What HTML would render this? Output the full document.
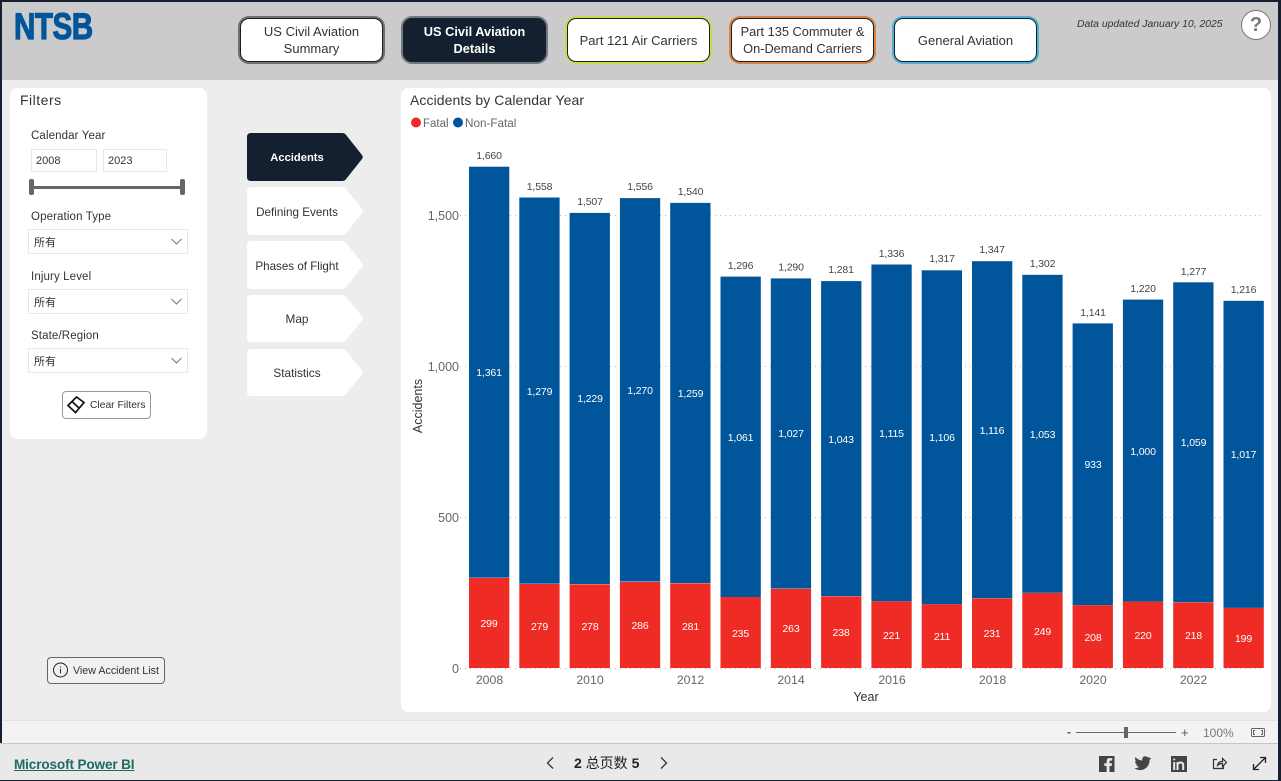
<!DOCTYPE html>
<html lang="en"><head><meta charset="utf-8"><title>NTSB Accidents by Calendar Year</title>
<style>
html,body{margin:0;padding:0;width:1281px;height:781px;overflow:hidden;background:#14202f}
body{font-family:"Liberation Sans","Noto Sans CJK SC",sans-serif;color:#333;position:relative}
.a{position:absolute;box-sizing:border-box}
.t{position:absolute;white-space:nowrap;line-height:1}
.btn{position:absolute;box-sizing:border-box;top:18px;height:44px;width:143px;border-radius:9px;background:#fff;border:1px solid #14202f;text-align:center;font-size:13px;line-height:17px;color:#333;display:flex;align-items:center;justify-content:center}
.lbl{position:absolute;font-size:11.5px;color:#333;letter-spacing:.12px;line-height:1;white-space:nowrap}
.dd{position:absolute;box-sizing:border-box;left:28px;width:160px;height:25px;background:#fff;border:1px solid #e8e8e8;font-size:11px;line-height:27px;padding-left:5px;color:#333}
.inp{position:absolute;box-sizing:border-box;top:149px;height:23px;background:#fff;border:1px solid #e8e8e8;font-size:11px;line-height:22px;padding-left:4px;color:#333}
</style></head><body>
<div class="a" style="left:2px;top:2px;width:1276px;height:78px;background:#cbcbcb"></div>
<div class="a" style="left:2px;top:80px;width:1276px;height:640px;background:#ededed"></div>
<div class="a" style="left:2px;top:720px;width:1276px;height:23px;background:#f3f3f3;border-top:1px solid #e2e2e2"></div>
<div class="a" style="left:0;top:743px;width:1278px;height:37px;background:#e9e9e9;border-top:1px solid #c6c6c6"></div>
<div class="t" style="left:14px;top:8px;font-size:37px;font-weight:bold;color:#00559b;letter-spacing:-.6px;transform:scaleX(.8);transform-origin:0 0;-webkit-text-stroke:1.2px #00559b">NTSB</div>

<div class="btn" style="left:240px;box-shadow:0 0 0 2px #6f6f6f">US Civil Aviation<br>Summary</div>
<div class="btn" style="left:403px;background:#14202f;color:#fff;font-weight:bold;font-size:12.800px;box-shadow:0 0 0 2px #72787f">US Civil Aviation<br>Details</div>
<div class="btn" style="left:567px;box-shadow:0 0 0 2px #d2d64c">Part 121 Air Carriers</div>
<div class="btn" style="left:731px;box-shadow:0 0 0 2px #d9833f;font-size:12.800px">Part 135 Commuter &amp;<br>On-Demand Carriers</div>
<div class="btn" style="left:894px;box-shadow:0 0 0 2px #4fb0cf">General Aviation</div>
<div class="t" style="left:1077px;top:20px;font-size:10.400px;font-style:italic;color:#333">Data updated January 10, 2025</div>
<div class="a" style="left:1241px;top:10px;width:30px;height:30px;border-radius:50%;background:#fff;border:1px solid #777;color:#777;font-size:20px;line-height:28px;text-align:center;font-weight:bold">?</div>

<div class="a" style="left:10px;top:88px;width:197px;height:351px;background:#fff;border-radius:8px"></div>
<div class="t" style="left:20px;top:93px;font-size:14px;letter-spacing:.5px;color:#333">Filters</div>
<div class="lbl" style="left:31px;top:131px">Calendar Year</div>
<div class="inp" style="left:31px;width:66px">2008</div>
<div class="inp" style="left:103px;width:64px">2023</div>
<div class="a" style="left:31px;top:186px;width:152px;height:3px;background:#666"></div>
<div class="a" style="left:29px;top:179px;width:5px;height:16px;background:#666;border-radius:2px"></div>
<div class="a" style="left:180px;top:179px;width:5px;height:16px;background:#666;border-radius:2px"></div>
<div class="lbl" style="left:31px;top:211.500px">Operation Type</div>
<div class="dd" style="top:229px">所有</div>
<div class="lbl" style="left:31px;top:271.500px">Injury Level</div>
<div class="dd" style="top:289px">所有</div>
<div class="lbl" style="left:31px;top:330.500px">State/Region</div>
<div class="dd" style="top:348px">所有</div>
<svg class="a" style="left:0;top:0" width="400" height="720" fill="none" stroke="#777" stroke-width="1">
<path d="M171.500 239l5 5 5-5M171.500 299l5 5 5-5M171.500 358l5 5 5-5"/>
<path d="M247 137q0-4 4-4h91q3 0 4.500 2.500l15.500 19.500q1.500 2 0 4l-15.500 19.500q-1.500 2.500-4.500 2.500h-91q-4 0-4-4z" fill="#14202f" stroke="none"/>
<path d="M247 191q0-4 4-4h91q3 0 4.500 2.500l15.500 19.500q1.500 2 0 4l-15.500 19.500q-1.500 2.500-4.500 2.500h-91q-4 0-4-4z" fill="#fff" stroke="none"/>
<path d="M247 245q0-4 4-4h91q3 0 4.500 2.500l15.500 19.500q1.500 2 0 4l-15.500 19.500q-1.500 2.500-4.500 2.500h-91q-4 0-4-4z" fill="#fff" stroke="none"/>
<path d="M247 299q0-4 4-4h91q3 0 4.500 2.500l15.500 19q1.500 2 0 4l-15.500 19q-1.500 2.500-4.500 2.500h-91q-4 0-4-4z" fill="#fff" stroke="none"/>
<path d="M247 353q0-4 4-4h91q3 0 4.500 2.500l15.500 19q1.500 2 0 4l-15.500 19q-1.500 2.500-4.500 2.500h-91q-4 0-4-4z" fill="#fff" stroke="none"/>
</svg>
<div class="t" style="left:247px;width:100px;top:153px;text-align:center;color:#fff;font-weight:bold;font-size:11.200px">Accidents</div>
<div class="t" style="left:247px;width:100px;top:207px;text-align:center;font-size:11.700px">Defining Events</div>
<div class="t" style="left:247px;width:100px;top:261px;text-align:center;font-size:11.600px">Phases of Flight</div>
<div class="t" style="left:247px;width:100px;top:314px;text-align:center;font-size:11.800px">Map</div>
<div class="t" style="left:247px;width:100px;top:368px;text-align:center;font-size:11.800px">Statistics</div>

<div class="a" style="left:62px;top:391px;width:89px;height:28px;border:1px solid #999;border-radius:4px;background:#fff"></div>
<svg class="a" style="left:66px;top:395px" width="20" height="20" fill="none" stroke="#111" stroke-width="1.700"><path d="M2 10.500L10.500 2 18 7.500 9.500 17.500zM6 6.500l7 6.500"/></svg>
<div class="t" style="left:90px;top:401px;font-size:10.300px;color:#333">Clear Filters</div>
<div class="a" style="left:47px;top:657px;width:118px;height:27px;border:1px solid #666;border-radius:4px;background:#f1f1f1"></div>
<svg class="a" style="left:52px;top:662px" width="17" height="17" fill="none" stroke="#222" stroke-width="1"><circle cx="8.500" cy="8" r="7"/><path d="M8.500 7v4.500M8.500 4.500v1.300"/></svg>
<div class="t" style="left:73px;top:666px;font-size:10.700px;color:#333">View Accident List</div>

<div class="a" style="left:401px;top:88px;width:870px;height:624px;background:#fff;border-radius:8px"></div>
<div class="t" style="left:410px;top:93px;font-size:14px;letter-spacing:.08px;color:#333">Accidents by Calendar Year</div>
<svg class="a" style="left:0;top:0" width="1281" height="720" font-family="'Liberation Sans',sans-serif" font-size="10.500" letter-spacing="-.15" text-anchor="middle">
<circle cx="416" cy="122.500" r="5" fill="#ee2b24"/><circle cx="458" cy="122.500" r="5" fill="#00559b"/>
<text x="423" y="127" text-anchor="start" font-size="11.500" letter-spacing="0" fill="#666">Fatal</text>
<text x="465" y="127" text-anchor="start" font-size="11.700" letter-spacing="0" fill="#666">Non-Fatal</text>
<g stroke="#b9b9b9" stroke-dasharray="1 4" stroke-width="1">
<path d="M460 215.500H1263M460 366.500H1263M460 517.500H1263M460 668.500H1263"/></g>
<g fill="#666" font-size="12.500" letter-spacing="0" text-anchor="end">
<text x="459" y="220">1,500</text><text x="459" y="371">1,000</text><text x="459" y="522">500</text><text x="459" y="673">0</text></g>
<text transform="translate(422,406) rotate(-90)" font-size="12.500" letter-spacing="0" fill="#333">Accidents</text>
<text x="866" y="701" font-size="12.500" letter-spacing="0" fill="#333">Year</text>
<g fill="#666" font-size="12.300" letter-spacing="0">
<text x="489.500" y="684">2008</text><text x="590" y="684">2010</text><text x="690.500" y="684">2012</text><text x="791" y="684">2014</text><text x="892" y="684">2016</text><text x="992.500" y="684">2018</text><text x="1093" y="684">2020</text><text x="1193.500" y="684">2022</text></g>
<g fill="#00559b">
<rect x="469" y="166.700" width="40.300" height="411"/><rect x="519.300" y="197.500" width="40.300" height="386.200"/><rect x="569.600" y="212.900" width="40.300" height="371.100"/><rect x="619.900" y="198.100" width="40.300" height="383.500"/><rect x="670.200" y="202.900" width="40.300" height="380.200"/><rect x="720.500" y="276.600" width="40.300" height="320.400"/><rect x="770.800" y="278.400" width="40.300" height="310.200"/><rect x="821.100" y="281.100" width="40.300" height="315"/><rect x="871.400" y="264.500" width="40.300" height="336.800"/><rect x="921.700" y="270.300" width="40.300" height="334"/><rect x="972" y="261.200" width="40.300" height="337"/><rect x="1022.300" y="274.800" width="40.300" height="318"/><rect x="1072.600" y="323.400" width="40.300" height="281.800"/><rect x="1122.900" y="299.600" width="40.300" height="302"/><rect x="1173.200" y="282.300" width="40.300" height="319.900"/><rect x="1223.500" y="300.800" width="40.300" height="307.100"/></g>
<g fill="#ee2b24">
<rect x="469" y="578" width="40.300" height="90"/><rect x="519.300" y="584" width="40.300" height="84"/><rect x="569.600" y="584.300" width="40.300" height="83.700"/><rect x="619.900" y="582" width="40.300" height="86"/><rect x="670.200" y="583.400" width="40.300" height="84.600"/><rect x="720.500" y="597" width="40.300" height="71"/><rect x="770.800" y="588.900" width="40.300" height="79.100"/><rect x="821.100" y="596.300" width="40.300" height="71.700"/><rect x="871.400" y="601.300" width="40.300" height="66.700"/><rect x="921.700" y="604.300" width="40.300" height="63.700"/><rect x="972" y="598.400" width="40.300" height="69.600"/><rect x="1022.300" y="593" width="40.300" height="75"/><rect x="1072.600" y="605.200" width="40.300" height="62.800"/><rect x="1122.900" y="601.600" width="40.300" height="66.400"/><rect x="1173.200" y="602.400" width="40.300" height="65.600"/><rect x="1223.500" y="608" width="40.300" height="60"/></g>
<g fill="#444">
<text x="489" y="159">1,660</text><text x="539.500" y="190">1,558</text><text x="590" y="205">1,507</text><text x="640" y="190">1,556</text><text x="690.500" y="195">1,540</text><text x="740.500" y="269">1,296</text><text x="791" y="270.500">1,290</text><text x="841" y="273">1,281</text><text x="891.500" y="257">1,336</text><text x="942" y="262">1,317</text><text x="992" y="253">1,347</text><text x="1042.500" y="267">1,302</text><text x="1093" y="316">1,141</text><text x="1143" y="292">1,220</text><text x="1193.500" y="275">1,277</text><text x="1243.500" y="293">1,216</text></g>
<g fill="#fff">
<text x="489" y="376">1,361</text><text x="539.500" y="395">1,279</text><text x="590" y="402">1,229</text><text x="640" y="394">1,270</text><text x="690.500" y="397">1,259</text><text x="740.500" y="441">1,061</text><text x="791" y="437">1,027</text><text x="841" y="443">1,043</text><text x="891.500" y="437">1,115</text><text x="942" y="441">1,106</text><text x="992" y="434">1,116</text><text x="1042.500" y="438">1,053</text><text x="1093" y="468">933</text><text x="1143" y="455">1,000</text><text x="1193.500" y="446">1,059</text><text x="1243.500" y="458">1,017</text>
<text x="489" y="627">299</text><text x="539.500" y="630">279</text><text x="590" y="630">278</text><text x="640" y="629">286</text><text x="690.500" y="630">281</text><text x="740.500" y="637">235</text><text x="791" y="632">263</text><text x="841" y="636">238</text><text x="891.500" y="639">221</text><text x="942" y="640">211</text><text x="992" y="637">231</text><text x="1042.500" y="635">249</text><text x="1093" y="641">208</text><text x="1143" y="639">220</text><text x="1193.500" y="639">218</text><text x="1243.500" y="642">199</text></g>
</svg>

<div class="t" style="left:14px;top:757.500px;font-size:13.600px;font-weight:bold;color:#1f6b60;text-decoration:underline;letter-spacing:-.15px">Microsoft Power BI</div>
<div class="t" style="left:574px;top:756px;font-size:14px;color:#222;font-weight:bold">2 <span style="font-weight:normal">总页数</span> 5</div>
<div class="t" style="left:1067px;top:726px;font-size:12px;color:#555;font-weight:bold">-</div>
<div class="t" style="left:1181px;top:726px;font-size:13px;color:#555">+</div>
<div class="t" style="left:1203px;top:727px;font-size:12px;color:#777">100%</div>
<svg class="a" style="left:0;top:720px" width="1281" height="61" fill="none" stroke="#333">
<path d="M553 37.500l-5.500 5.500 5.500 5.500M661 37.500l5.500 5.500-5.500 5.500" stroke-width="1.300"/>
<path d="M1076 12.500h100" stroke="#666"/><rect x="1124" y="7" width="4" height="11" fill="#666" stroke="none"/>
<rect x="1251.500" y="8.500" width="13" height="8" stroke="#666" rx="1"/><path d="M1255 10.500h-1.500v4h1.500M1261 10.500h1.500v4h-1.500" stroke="#666"/>
<path d="M1099 36h15.500v16h-5v-6h2.200l.4-2.700h-2.600v-1.500q0-1.200 1.300-1.200h1.400v-2.400q-3.200-.6-4.600.4-1 .8-1 2.900v1.800h-2.300V46h2.300v6H1099z" fill="#444" stroke="none"/>
<path d="M1150 37.200q-1 .5-1.900.6 1-.6 1.400-1.800-1 .6-2.100.8-1-1-2.300-1-2.900.2-2.900 3.400 0 .4.100.8-4-.2-6.800-3.400-1.300 2.700 1 4.500-.8 0-1.500-.4 0 2.600 2.600 3.300-.8.2-1.500 0 .8 2.200 3.100 2.300-2.200 1.800-5 1.400 8 4.300 13-1.300 2.500-3 2.300-7 1.100-.8 1.800-1.700z" transform="translate(0 .5)" fill="#444" stroke="none"/>
<rect x="1171" y="36" width="16" height="16" fill="#444" stroke="none"/>
<path d="M1174.200 42v8M1174.200 38.600v1.700" stroke="#e9e9e9" stroke-width="2"/><path d="M1177.500 50v-8M1177.500 45q.5-2.500 3-2.500 2.700 0 2.700 3v4.500" stroke="#e9e9e9" stroke-width="2"/>
<path d="M1217 39.500h-3.500v9h10v-3M1217.500 45.500q.5-4 5-4v-3l4 4-4 4v-3q-3 0-5 2z" stroke-width="1.200" stroke="#333"/>
<path d="M1254 49l11-11M1260 37.500h5.500V43M1253.500 44v5.500h5.500" stroke-width="1.300" stroke="#222"/>
</svg>
</body></html>
